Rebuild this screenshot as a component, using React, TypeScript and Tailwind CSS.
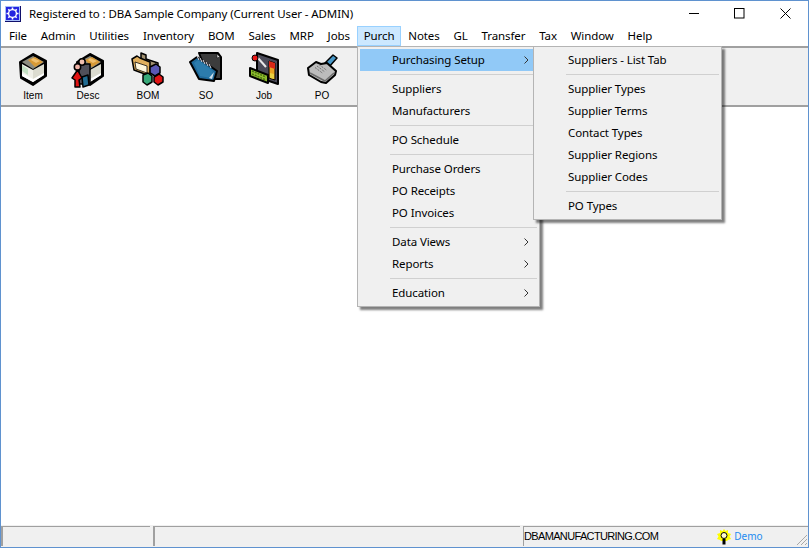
const UI_FONT = "font-['Noto_Sans',sans-serif] text-[11.5px] tracking-[-0.1px]"

const menuBar = ["File", "Admin", "Utilities", "Inventory", "BOM", "Sales", "MRP", "Jobs", "Purch", "Notes", "GL", "Transfer", "Tax", "Window", "Help"]

type Entry = { label?: string; sub?: boolean; active?: boolean }

const purchMenu: Entry[] = [
  { label: "Purchasing Setup", sub: true, active: true },
  {},
  { label: "Suppliers" },
  { label: "Manufacturers" },
  {},
  { label: "PO Schedule" },
  {},
  { label: "Purchase Orders" },
  { label: "PO Receipts" },
  { label: "PO Invoices" },
  {},
  { label: "Data Views", sub: true },
  { label: "Reports", sub: true },
  {},
  { label: "Education", sub: true },
]

const setupMenu: Entry[] = [
  { label: "Suppliers - List Tab" },
  {},
  { label: "Supplier Types" },
  { label: "Supplier Terms" },
  { label: "Contact Types" },
  { label: "Supplier Regions" },
  { label: "Supplier Codes" },
  {},
  { label: "PO Types" },
]

function Box({ x = 0 }: { x?: number }) {
  return (
    <g transform={`translate(${x} 0)`} strokeLinejoin="round">
      <path d="M2 10 15 2 28 9 28 24 15 33 3 26Z" fill="#000" stroke="#000" strokeWidth="2" />
      <path d="M4 10 15 4 26 10 15 17Z" fill="#8c8c80" />
      <path d="M10 8 17 5 25 10 17 15Z" fill="#d89a36" />
      <path d="M15 6 22 9 18 11 13 8Z" fill="#f0c070" />
      <path d="M4 12 15 18 15 30 4 24Z" fill="#f0f0e8" />
      <path d="M4 13 10 17 10 23 4 19Z" fill="#c4e0c4" />
      <path d="M15 18 26 12 26 23 15 30Z" fill="#dcdcd0" />
      <path d="M4 24 15 30 15 27 4 21Z" fill="#fff" />
      <path d="M15 30 26 23 26 21 15 27Z" fill="#fff" />
    </g>
  )
}

function ItemIcon() {
  return (
    <svg width="30" height="35" viewBox="0 0 30 35">
      <Box />
    </svg>
  )
}

function DescIcon() {
  return (
    <svg width="34" height="37" viewBox="0 0 34 37">
      <Box x={4} />
      <g stroke="#000" strokeWidth="1.5" strokeLinejoin="round">
        <rect x="8" y="12" width="11" height="20" fill="#50505a" />
        <circle cx="11" cy="10" r="3.2" fill="#f0c0b0" />
        <circle cx="6.5" cy="15" r="3.2" fill="#f2b4a8" />
        <path d="M11 25 17 23 18 33 12 35Z" fill="#1f6a90" />
        <path d="M6.5 18 11 26 8 28 9 35 4 35 4 28 1 26Z" fill="#e01414" />
      </g>
    </svg>
  )
}

function BomIcon() {
  return (
    <svg width="34" height="35" viewBox="0 0 34 35">
      <g stroke="#000" strokeLinejoin="round" strokeWidth="1.5">
        <path d="M10 1 15 3 15 7 27 11 27 22 10 17Z" fill="#a09070" />
        <path d="M1 7 6 4 9 6 19 10 19 24 3 18Z" fill="#e0ae5c" />
        <path d="M4 10 16 14 16 21 5 17Z" fill="#fff6dc" strokeWidth="0.75" />
        <path d="M19 15 25 12 29 15 29 21 24 24 19 21Z" fill="#5a58b4" />
        <path d="M12 23 17 21 21 24 21 30 16 33 12 30Z" fill="#38a878" />
        <path d="M23 25 28 22 32 25 32 30 27 33 23 30Z" fill="#e01414" />
      </g>
    </svg>
  )
}

function SoIcon() {
  return (
    <svg width="34" height="31" viewBox="0 0 34 31">
      <g stroke="#000" strokeLinejoin="round">
        <path d="M10 1 29 1 32 5 32 27 20 27Z" fill="#3c3c3c" strokeWidth="2" />
        <path d="M28 2 31 5 28 6Z" fill="#dcdcdc" strokeWidth="0.5" />
        <path d="M1 10 8 5 28 19 25 29 10 27Z" fill="#1f6a9a" strokeWidth="2" />
        <path d="M5 11 9 8 24 19 22 26 11 24Z" fill="#2c7cac" strokeWidth="0" />
        <path d="M20 26 25 20 23 27Z" fill="#cfe0ea" strokeWidth="0" />
        <path d="M8 4 10 8M11 6 13 10M14 8 16 12M17 10 19 14M20 12 22 16" stroke="#e4e4f0" strokeWidth="1" fill="none" />
      </g>
    </svg>
  )
}

function JobIcon() {
  return (
    <svg width="32" height="33" viewBox="0 0 32 33">
      <g stroke="#000" strokeLinejoin="round">
        <path d="M9 1 30 8 30 32 9 25Z" fill="#4a4a58" strokeWidth="2" />
        <path d="M21 9 27 11 27 28 21 26Z" fill="#e8a020" strokeWidth="1" />
        <path d="M21 9 27 11 27 17 21 15Z" fill="#d82818" strokeWidth="0" />
        <path d="M22 21 26 22 26 27 22 26Z" fill="#e8d040" strokeWidth="0" />
        <path d="M10 6 18 15" stroke="#e8e8e8" strokeWidth="2" fill="none" />
        <circle cx="7" cy="6" r="3" fill="#e81818" strokeWidth="1" />
        <path d="M2 16 20 23 20 31 2 24Z" fill="#90c030" strokeWidth="2" />
        <path d="M4 19 18 25M4 22 18 28" stroke="#4a7010" strokeWidth="1.5" strokeDasharray="2 1" fill="none" />
      </g>
    </svg>
  )
}

function PoIcon() {
  return (
    <svg width="31" height="30" viewBox="0 0 31 30">
      <g stroke="#000" strokeLinejoin="round">
        <path d="M18 9 26 1 30 4 22 13Z" fill="#4898c8" strokeWidth="1.5" />
        <path d="M1 14 9 8 14 10 20 9 29 17 28 21 19 29 14 28 2 21Z" fill="#bcbcbc" strokeWidth="2" />
        <path d="M3 19 18 27 27 19" fill="none" stroke="#6c6c6c" strokeWidth="1.5" />
        <path d="M10 12 18 18M12 10.5 20 16.5M8 13.5 16 19.5" stroke="#5c5c5c" strokeWidth="1" strokeDasharray="1 1" fill="none" />
      </g>
    </svg>
  )
}

const tools = [
  { label: "Item", icon: <ItemIcon />, shift: "", top: "pt-[4px]" },
  { label: "Desc", icon: <DescIcon />, shift: "-ml-[3px]", top: "pt-[4px]" },
  { label: "BOM", icon: <BomIcon />, shift: "ml-[2px]", top: "pt-[4px]" },
  { label: "SO", icon: <SoIcon />, shift: "", top: "pt-[4px]" },
  { label: "Job", icon: <JobIcon />, shift: "", top: "pt-[4px]" },
  { label: "PO", icon: <PoIcon />, shift: "", top: "pt-[6px]" },
]

function Menu({ items, className }: { items: Entry[]; className: string }) {
  return (
    <div className={`absolute top-[45px] border border-[#b4b4b4] bg-[#f0f0f0] p-[2px] shadow-[3px_3px_2px_rgba(0,0,0,0.5)] text-black ${className}`}>
      {items.map((it, i) =>
        it.label ? (
          <div key={i} className={`flex h-[22px] items-center pl-[32px] pr-[8px] ${it.active ? "bg-[#91c9f7]" : ""}`}>
            <span className="flex-1 leading-none">{it.label}</span>
            {it.sub && (
              <svg width="5" height="8" viewBox="0 0 5 8">
                <path d="M0.5 0.5 4 4 0.5 7.5" fill="none" stroke="#333" strokeWidth="1" />
              </svg>
            )}
          </div>
        ) : (
          <div key={i} className="ml-[30px] flex h-[7px] items-center">
            <div className="h-px w-full bg-[#d0d0d0]" />
          </div>
        )
      )}
    </div>
  )
}

function StatusPanel({ className, children }: { className: string; children?: React.ReactNode }) {
  return (
    <div className={`flex h-[20px] items-center border-l-2 border-t border-[#a0a0a0] bg-[#f0f0f0] ${className}`}>
      {children}
    </div>
  )
}

export default function App() {
  return (
    <div className={`relative flex h-[548px] w-[809px] flex-col overflow-hidden border border-[#5f92cf] bg-white ${UI_FONT}`}>
      <div className="flex h-[25px] shrink-0 items-center bg-white">
        <svg width="16" height="16" viewBox="0 0 16 16" className="ml-[4px]">
          <rect width="16" height="16" fill="#10106c" />
          <rect x="0" y="0" width="15" height="15" fill="#a8c0f8" />
          <rect x="1" y="1" width="13" height="13" fill="#2424e0" />
          <circle cx="7.5" cy="7.5" r="4.6" fill="#fff" />
          <path d="M7.5 1.500V13.500M1.500 7.500H13.500M3.300 3.300 11.700 11.700M11.700 3.300 3.300 11.700" stroke="#fff" strokeWidth="1.6" />
          <circle cx="7.5" cy="7.5" r="3.2" fill="#2424e0" />
        </svg>
        <span className="ml-[8px] flex-1 text-black">Registered to : DBA Sample Company (Current User - ADMIN)</span>
        <svg width="11" height="11" viewBox="0 0 11 11" className="mr-[34px]">
          <path d="M0 5.5H10" stroke="#000" />
        </svg>
        <svg width="11" height="11" viewBox="0 0 11 11" className="mr-[35px]">
          <rect x="0.5" y="0.5" width="9.5" height="9.5" fill="none" stroke="#000" />
        </svg>
        <svg width="11" height="11" viewBox="0 0 11 11" className="mr-[17px]">
          <path d="M0.5 0.5 10.5 10.5M10.5 0.5 0.5 10.5" stroke="#000" />
        </svg>
      </div>

      <div className="flex h-[20px] shrink-0 items-stretch bg-white pl-[1px] text-black">
        {menuBar.map((m) => (
          <div
            key={m}
            className={`flex items-center border px-[5.93px] ${m === "Purch" ? "border-[#99d1ff] bg-[#cce8ff]" : "border-transparent"}`}
          >
            {m}
          </div>
        ))}
      </div>

      <div className="flex h-[61px] shrink-0 items-start border-y-2 border-[#a0a0a0] bg-[#f0f0f0] pl-[3px]">
        {tools.map((t) => (
          <div key={t.label} className={`flex h-full w-[58px] flex-col items-center ${t.shift}`}>
            <div className={`flex h-[41px] justify-center ${t.top}`}>{t.icon}</div>
            <span className="mt-[1px] font-['Liberation_Sans',sans-serif] text-[10px] leading-[12px] tracking-normal text-black">{t.label}</span>
          </div>
        ))}
      </div>

      <div className="flex-1 bg-white" />

      <div className="flex h-[22px] shrink-0 items-start gap-[3px] bg-[#f0f0f0] pt-[1px]">
        <StatusPanel className="w-[149px]" />
        <StatusPanel className="w-[367px]" />
        <StatusPanel className="relative flex-1 !border-l">
          <span className="font-['Liberation_Sans',sans-serif] text-[11px] tracking-[-0.65px] text-black">DBAMANUFACTURING.COM</span>
          <svg width="14" height="17" viewBox="0 0 14 17" className="ml-[59px] mt-[1px]">
            <path d="M7 0 8.500 2 11 1 11 4 14 5 12.500 7.500 14 10 11 11 10 12 4 12 3 11 0 10 1.500 7.500 0 5 3 4 3 1 5.500 2Z" fill="#ffff00" />
            <circle cx="7" cy="6.500" r="3" fill="#fffbd0" stroke="#000" />
            <path d="M5.500 10H8.500V15.500H5.500Z" fill="#000" />
          </svg>
          <span className="ml-[3px] text-[10px] tracking-normal text-[#1e8cf0]">Demo</span>
          <svg width="12" height="12" viewBox="0 0 12 12" className="absolute bottom-0 right-0">
            <path d="M11 1 1 11M11 5 5 11M11 9 9 11" stroke="#a8a8a8" strokeWidth="1" />
          </svg>
        </StatusPanel>
      </div>

      <Menu items={purchMenu} className="left-[356px] w-[183px]" />
      <Menu items={setupMenu} className="left-[532px] w-[189px]" />
    </div>
  )
}
